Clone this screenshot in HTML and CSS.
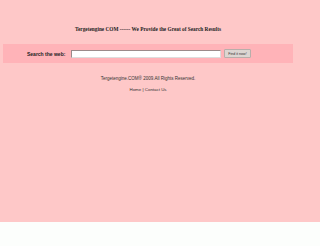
FILE: index.html
```html
<!DOCTYPE html>
<html>
<head>
<meta charset="utf-8">
<link rel="stylesheet" href="styles.css">
</head>
<body>
<div class="page">
  <div class="wrap">
    <h1 class="title">Tergetengine COM ------ We Provide the Great of Search Results</h1>
    <form class="band">
      <label class="label">Search the web:</label>
      <input class="field" type="text">
      <button class="btn" type="button">Find it now!</button>
    </form>
    <p class="copy">Tergetengine.COM® 2009.All Rights Reserved.</p>
    <p class="links"><a>Home</a> | <a>Contact Us</a></p>
  </div>
</div>
</body>
</html>
```
FILE: styles.css
```css
html, body { margin: 0; padding: 0; background: #fcfefc; }
.page {
  height: 222px;
  background: #fec8c8;
  padding-top: 26px;
  box-sizing: border-box;
  overflow: hidden;
}
.wrap {
  width: 296px;
}
.title {
  margin: 0;
  height: 7px;
  line-height: 7px;
  font-family: "Liberation Serif", serif;
  font-weight: bold;
  font-size: 5.3px;
  color: #222;
  text-align: center;
}
.band {
  margin: 11px 3px 0;
  height: 19px;
  background: #ffb3b8;
  display: flex;
  align-items: center;
  padding-left: 24px;
  box-sizing: border-box;
}
.label {
  font-family: "Liberation Sans", sans-serif;
  font-weight: bold;
  font-size: 5px;
  color: #222;
  width: 44px;
}
.field {
  width: 150px;
  height: 8px;
  box-sizing: border-box;
  margin: 0;
  padding: 0;
  border: 1px solid #9a8a8a;
  border-right-color: #ddd;
  border-bottom-color: #ddd;
  background: #fff;
}
.btn {
  margin: 0 0 0 3px;
  width: 27px;
  height: 9px;
  padding: 0;
  box-sizing: border-box;
  font-family: "Liberation Sans", sans-serif;
  font-size: 3.6px;
  color: #333;
  background: #dcd6d2;
  border: 1px solid #b8aeaa;
  border-radius: 1px;
}
.copy {
  margin: 13px 0 0;
  text-align: center;
  font-family: "Liberation Sans", sans-serif;
  font-size: 4.5px;
  line-height: 6px;
  color: #333;
}
.links {
  margin: 5px 0 0;
  text-align: center;
  font-family: "Liberation Sans", sans-serif;
  font-size: 4.4px;
  line-height: 6px;
  color: #333;
}
.links a { color: #333; text-decoration: none; }
```
